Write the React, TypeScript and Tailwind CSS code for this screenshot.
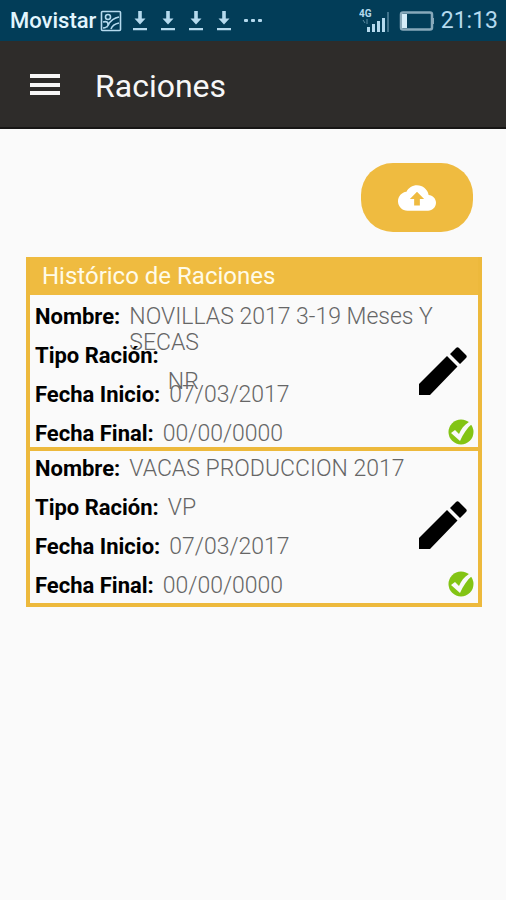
interface Campo {
  label: string;
  value: string;
}

interface Racion {
  id: number;
  campos: Campo[];
}

const raciones: Racion[] = [
  {
    id: 1,
    campos: [
      { label: "Nombre:", value: "NOVILLAS 2017 3-19 Meses Y SECAS" },
      { label: "Tipo Ración:", value: "\nNR" },
      { label: "Fecha Inicio:", value: "07/03/2017" },
      { label: "Fecha Final:", value: "00/00/0000" },
    ],
  },
  {
    id: 2,
    campos: [
      { label: "Nombre:", value: "VACAS PRODUCCION 2017" },
      { label: "Tipo Ración:", value: "VP" },
      { label: "Fecha Inicio:", value: "07/03/2017" },
      { label: "Fecha Final:", value: "00/00/0000" },
    ],
  },
];

function DownloadIcon() {
  return (
    <svg viewBox="0 0 16 22" className="h-[22px] w-4" fill="currentColor">
      <path d="M6.2 1h3.6v7.5h3.7L8 14.5 2.5 8.5h3.7zM1 18h14v2.2H1z" />
    </svg>
  );
}

function PencilIcon() {
  return (
    <svg viewBox="0 0 48 48" className="size-12" fill="currentColor">
      <path d="M0 48V37L28 9l10.500 10.500L11 48zM31 7l6-6q1.500-1.500 3 0l7 7q1.500 1.500 0 3l-6 6z" />
    </svg>
  );
}

function StatusBar() {
  return (
    <div className="flex h-[41px] items-center justify-between bg-[#023d58] pr-2 pl-[10px] text-[#b5daee]">
      <div className="flex items-center">
        <span className="text-[22px] font-medium text-[#e2f6ff]">Movistar</span>
        <svg viewBox="0 0 22 22" className="ml-1 size-[22px]" fill="none" stroke="currentColor" strokeWidth="1.6">
          <rect x="1.5" y="1.5" width="19" height="19" rx="1" />
          <circle cx="8" cy="7" r="2.5" />
          <path d="M3 12c4-1 5 0 5 3 3-5 6-7 11-8M3 18c4 0 5-2 6-4M11 19c1-3 3-5 8-6" />
        </svg>
        <div className="ml-[10px] flex gap-3">
          <DownloadIcon />
          <DownloadIcon />
          <DownloadIcon />
          <DownloadIcon />
        </div>
        <svg viewBox="0 0 18 4" className="ml-3 h-1 w-[18px]" fill="currentColor">
          <rect x="0" y="0" width="4" height="3" rx="1" />
          <rect x="7" y="0" width="4" height="3" rx="1" />
          <rect x="14" y="0" width="4" height="3" rx="1" />
        </svg>
      </div>

      <div className="flex items-center">
        <svg viewBox="0 0 32 26" className="h-[26px] w-8" fill="currentColor">
          <text x="0" y="9" fontSize="10" fontWeight="700" fontFamily="Roboto, sans-serif">4G</text>
          <rect x="8" y="19" width="3" height="5" />
          <rect x="13" y="16" width="3" height="8" />
          <rect x="18" y="13" width="3" height="11" />
          <rect x="23" y="10" width="3" height="14" />
          <rect x="28" y="4" width="2" height="20" opacity="0.35" />
          <path d="M4 12l2 3M8 11v5" stroke="currentColor" opacity="0.5" />
        </svg>
        <svg viewBox="0 0 36 20" className="ml-2 h-5 w-9" fill="none">
          <rect x="2" y="1.5" width="31" height="17" rx="2" stroke="#88a9ba" strokeWidth="2.5" />
          <rect x="3" y="3" width="5" height="14" fill="#d5edf8" />
          <rect x="33" y="7" width="2" height="6" fill="#88a9ba" />
        </svg>
        <span className="ml-[6px] pt-px text-[23px]">21:13</span>
      </div>
    </div>
  );
}

function RacionItem({ campos }: Racion) {
  return (
    <li className="relative border-[#edb93c] px-[5px] pt-[9px] not-first:border-t-4 not-first:pt-[5px]">
      <dl className="flex flex-col gap-[13px]">
        {campos.map((campo) => (
          <div key={campo.label} className="flex h-[26px] gap-[9px] leading-[26px]">
            <dt className="shrink-0 text-[22px] font-bold text-black">{campo.label}</dt>
            <dd className="font-light whitespace-pre-line text-[#666666]">{campo.value}</dd>
          </div>
        ))}
      </dl>

      {/* EDITAR */}
      <button type="button" aria-label="Editar" className="absolute top-1/2 right-[11px] -translate-y-1/2 text-black">
        <PencilIcon />
      </button>

      {/* ESTADO */}
      <svg viewBox="0 0 26 26" className="absolute right-1 bottom-[2px] size-[26px]">
        <circle cx="13" cy="13" r="12.5" fill="#83c414" />
        <path d="M3 14l4-3 4 4C13 10 16 6 21 3l3 2C19 9 15 15 12 22z" fill="#fafafa" />
      </svg>
    </li>
  );
}

export default function App() {
  return (
    <div className="min-h-screen bg-[#fafafa] font-[Roboto,sans-serif]">
      <StatusBar />

      <header className="flex h-[88px] items-center border-b-2 border-[#171615] bg-[#2e2c2a] px-[29px] pt-1 text-[#f7f7f7]">
        <button type="button" aria-label="Menú">
          <svg viewBox="0 0 32 24" className="h-6 w-8" fill="currentColor">
            <path d="M1 0h30v4H1zM1 9h30v4H1zM1 17h30v4H1z" />
          </svg>
        </button>
        <h1 className="ml-[34px] text-[32px]">Raciones</h1>
      </header>

      <main className="pt-[34px] pr-6 pl-[26px]">
        <div className="flex justify-end pr-[9px]">
          <button
            type="button"
            aria-label="Subir raciones"
            className="flex h-[69px] w-28 items-center justify-center rounded-[32px] bg-[#efbb40] text-white"
          >
            <svg viewBox="0 0 24 24" className="size-[38px]" fill="currentColor">
              <path d="M19.35 10.04C18.67 6.59 15.64 4 12 4 9.11 4 6.6 5.64 5.35 8.04 2.34 8.36 0 10.91 0 14c0 3.31 2.69 6 6 6h13c2.76 0 5-2.24 5-5 0-2.64-2.05-4.78-4.65-4.96zM13.8 12.6v4.2h-3.6v-4.2H7.5L12 8.1l4.5 4.5z" />
            </svg>
          </button>
        </div>

        <section className="mt-[25px] border-4 border-t-0 border-[#edb93c] text-[23px]">
          <h2 className="bg-[#efbb40] px-3 text-[24px] leading-[38px] text-[#fffbe8]">Histórico de Raciones</h2>
          <ul className="pb-1">
            {raciones.map((racion) => (
              <RacionItem key={racion.id} {...racion} />
            ))}
          </ul>
        </section>
      </main>
    </div>
  );
}
